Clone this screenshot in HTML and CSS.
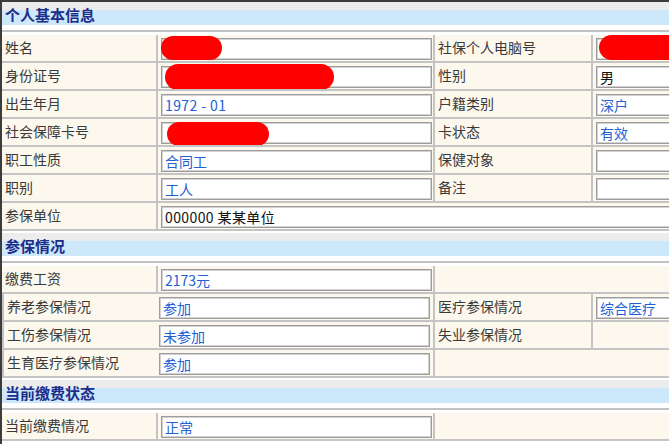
FILE: index.html
```html
<!DOCTYPE html>
<html lang="zh-CN">
<head>
<meta charset="utf-8">
<title>个人基本信息</title>
<link rel="stylesheet" href="styles.css">
</head>
<body>
<div class="frame">
  <div class="topbar"></div>

  <div class="sec-head first"><span>个人基本信息</span></div>
  <div class="grid">
    <div class="cell lbl">姓名</div>
    <div class="cell val"><div class="box"><span class="redact r-name"></span></div></div>
    <div class="cell lbl">社保个人电脑号</div>
    <div class="cell val"><div class="box wide"><span class="redact r-pc"></span></div></div>

    <div class="cell lbl">身份证号</div>
    <div class="cell val"><div class="box"><span class="redact r-id"></span></div></div>
    <div class="cell lbl">性别</div>
    <div class="cell val"><div class="box wide dark">男</div></div>

    <div class="cell lbl">出生年月</div>
    <div class="cell val"><div class="box num">1972 - 01</div></div>
    <div class="cell lbl">户籍类别</div>
    <div class="cell val"><div class="box wide">深户</div></div>

    <div class="cell lbl">社会保障卡号</div>
    <div class="cell val"><div class="box"><span class="redact r-card"></span></div></div>
    <div class="cell lbl">卡状态</div>
    <div class="cell val"><div class="box wide">有效</div></div>

    <div class="cell lbl">职工性质</div>
    <div class="cell val"><div class="box">合同工</div></div>
    <div class="cell lbl">保健对象</div>
    <div class="cell val"><div class="box wide"></div></div>

    <div class="cell lbl">职别</div>
    <div class="cell val"><div class="box">工人</div></div>
    <div class="cell lbl">备注</div>
    <div class="cell val"><div class="box wide"></div></div>

    <div class="cell lbl">参保单位</div>
    <div class="cell val span3"><div class="box full dark num">000000 某某单位</div></div>
  </div>

  <div class="sec-head"><span>参保情况</span></div>
  <div class="grid">
    <div class="cell lbl">缴费工资</div>
    <div class="cell val"><div class="box">2173元</div></div>
    <div class="cell val span2"></div>

    <div class="cell lbl">养老参保情况</div>
    <div class="cell val"><div class="box">参加</div></div>
    <div class="cell lbl">医疗参保情况</div>
    <div class="cell val"><div class="box wide">综合医疗</div></div>

    <div class="cell lbl">工伤参保情况</div>
    <div class="cell val"><div class="box">未参加</div></div>
    <div class="cell lbl">失业参保情况</div>
    <div class="cell val"></div>

    <div class="cell lbl">生育医疗参保情况</div>
    <div class="cell val"><div class="box">参加</div></div>
    <div class="cell val span2"></div>
  </div>

  <div class="sec-head"><span>当前缴费状态</span></div>
  <div class="grid">
    <div class="cell lbl">当前缴费情况</div>
    <div class="cell val"><div class="box">正常</div></div>
    <div class="cell val span2"></div>
  </div>
</div>
</body>
</html>
```

FILE: styles.css
```css
html, body {
  margin: 0;
  padding: 0;
  background: #ffffff;
  overflow: hidden;
}

body {
  font-family: "Noto Sans CJK SC", "Noto Sans", sans-serif;
  font-size: 14px;
  color: #3a3a3a;
}

.frame {
  width: 669px;
  box-sizing: border-box;
  border-left: 2px solid #3c3c3c;
  min-height: 444px;
  overflow: hidden;
}

.topbar {
  height: 2px;
  background: #3c3c3c;
}

.sec-head {
  height: 23px;
  margin-top: 2px;
  background: linear-gradient(#ececec 0, #ececec 8px, #cde8fa 8px, #cde8fa 23px);
  display: flex;
  align-items: center;
  padding-top: 2px;
  box-sizing: border-box;
}

.sec-head.first {
  margin-top: 0;
}

.sec-head span {
  padding-left: 3px;
  font-size: 15px;
  font-weight: bold;
  color: #1d2d8a;
  line-height: 1;
}

.grid {
  margin-top: 5px;
  border-top: 2px solid #c2c2c2;
  padding-top: 3px;
  display: grid;
  grid-template-columns: 154px 277px 158px minmax(0, 1fr);
}

.cell {
  height: 28px;
  box-sizing: border-box;
  background: #fdf8ed;
  border-bottom: 2px solid #c4c4c4;
  min-width: 0;
}

.lbl {
  padding-left: 3px;
  line-height: 25px;
  white-space: nowrap;
}

.val {
  padding-left: 3px;
  padding-top: 3px;
  overflow: hidden;
}

.grid > .cell:not(:nth-child(4n+1)) {
  border-left: 2px solid #c4c4c4;
}

.cell.val.span3 {
  grid-column: span 3;
}

.cell.val.span2 {
  grid-column: span 2;
}

.box {
  position: relative;
  height: 22px;
  width: 271px;
  box-sizing: border-box;
  background: #ffffff;
  border: 1px solid #9c9c9c;
  box-shadow: inset 0 0 0 1px #d2d2d2;
  padding-left: 3px;
  line-height: 20px;
  color: #2360d6;
  white-space: pre;
}

.box.num {
  letter-spacing: 0.4px;
}

.box.wide {
  width: 190px;
}

.box.full {
  width: 700px;
}

.box.dark {
  color: #111111;
}

.redact {
  position: absolute;
  background: #ff0000;
  border-radius: 13px;
}

.r-name {
  left: -1px;
  top: -3px;
  width: 61px;
  height: 24px;
}

.r-id {
  left: 3px;
  top: -3px;
  width: 169px;
  height: 26px;
}

.r-card {
  left: 5px;
  top: -1px;
  width: 102px;
  height: 24px;
}

.r-pc {
  left: 2px;
  top: -4px;
  width: 110px;
  height: 25px;
}
```
